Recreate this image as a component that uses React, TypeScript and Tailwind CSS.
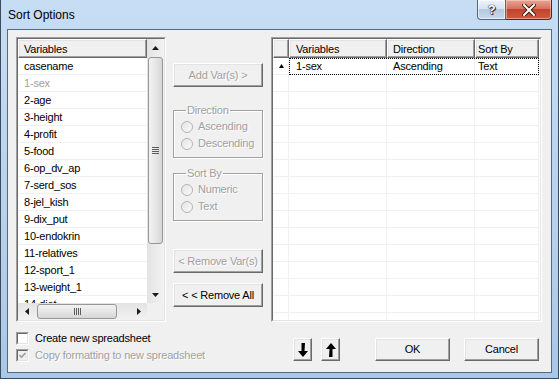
import React from "react";

const variables = [
  "casename",
  "1-sex",
  "2-age",
  "3-height",
  "4-profit",
  "5-food",
  "6-op_dv_ap",
  "7-serd_sos",
  "8-jel_kish",
  "9-dix_put",
  "10-endokrin",
  "11-relatives",
  "12-sport_1",
  "13-weight_1",
  "14-diet",
];

// classic 3D bevels
const raised =
  "border border-t-white border-l-white border-b-[#696969] border-r-[#696969] shadow-[inset_-1px_-1px_0_#a0a0a0,inset_1px_1px_0_#e3e3e3] bg-[#f0f0f0]";

function Sunken({ className, children }: { className?: string; children: React.ReactNode }) {
  return (
    <div className={`border border-t-[#a0a0a0] border-l-[#a0a0a0] border-b-white border-r-white ${className ?? ""}`}>
      <div className="w-full h-full border border-t-[#696969] border-l-[#696969] border-b-[#e3e3e3] border-r-[#e3e3e3] bg-white overflow-hidden">
        {children}
      </div>
    </div>
  );
}

function Button({
  children,
  disabled,
  className,
}: {
  children: React.ReactNode;
  disabled?: boolean;
  className?: string;
}) {
  return (
    <div
      className={`${raised} flex items-center justify-center ${
        disabled ? "text-[#a0a0a0] [text-shadow:1px_1px_0_#fff]" : "text-black"
      } ${className ?? ""}`}
    >
      {children}
    </div>
  );
}

function Tri({ dir }: { dir: "up" | "down" | "left" | "right" }) {
  const pts = {
    up: "0,4 7,4 3.5,0",
    down: "0,0 7,0 3.5,4",
    left: "4,0 4,7 0,3.5",
    right: "0,0 0,7 4,3.5",
  }[dir];
  const vertical = dir === "up" || dir === "down";
  return (
    <svg width={vertical ? 7 : 4} height={vertical ? 4 : 7} viewBox={vertical ? "0 0 7 4" : "0 0 4 7"}>
      <polygon points={pts} fill="#1a1a1a" />
    </svg>
  );
}

function Radio({ label }: { label: string }) {
  return (
    <div className="flex items-center h-[17px]">
      <span className="w-[12px] h-[12px] rounded-full border border-[#b4b4b4] bg-[linear-gradient(135deg,#e4e4e4,#fafafa)]" />
      <span className="ml-[5px] text-[#a0a0a0] [text-shadow:1px_1px_0_#fff]">{label}</span>
    </div>
  );
}

function Group({ title, options, className }: { title: string; options: string[]; className?: string }) {
  return (
    <fieldset className={`border border-[#a0a0a0] shadow-[1px_1px_0_#fff,inset_1px_1px_0_#fff] h-[54px] pl-[7px] pt-[1px] ${className ?? ""}`}>
      <legend className="ml-[5px] px-[1px] text-[#a0a0a0] [text-shadow:1px_1px_0_#fff] leading-[13px]">{title}</legend>
      {options.map((o) => (
        <Radio key={o} label={o} />
      ))}
    </fieldset>
  );
}

function ArrowButton({ dir }: { dir: "up" | "down" }) {
  return (
    <Button className="w-[19px] h-[23px]">
      <svg width="10" height="14" viewBox="0 0 10 14">
        <polygon
          points={
            dir === "down"
              ? "3.5,0 7,0 6.5,8 10,8 5,14 0,8 3.5,8"
              : "5,0 10,6 6.5,6 6.5,14 3,14 3.5,6 0,6"
          }
          fill="#000"
        />
      </svg>
    </Button>
  );
}

export default function App() {
  return (
    <div className="w-[559px] h-[379px] overflow-hidden flex flex-col border-x border-b border-[#3d4b5c] bg-[linear-gradient(180deg,#c6ddf4,#b7d1ec_60%,#a9c7e6)] font-['Liberation_Sans',Arial,sans-serif] text-[11px] tracking-[-0.2px] text-black">
      {/* Title bar */}
      <div className="h-[29px] flex items-start pl-[7px] pr-[6px]">
        <span className="mt-[7px] text-[12px] tracking-normal leading-[16px] text-black">Sort Options</span>
        <div className="ml-auto flex">
          <div className="w-[29px] h-[20px] border border-t-0 border-[#52657a] rounded-bl-[4px] bg-[linear-gradient(180deg,#eef3f9,#d7e3f0_45%,#b6c9de_50%,#c9d9ea)] flex items-center justify-center shadow-[inset_0_0_0_1px_rgba(255,255,255,0.6)]">
            <span className="font-bold text-[13px] leading-none text-white [text-shadow:0_0_1px_#223,0_0_1px_#223,1px_1px_0_#334]">?</span>
          </div>
          <div className="w-[46px] h-[20px] border border-t-0 border-l-0 border-[#5a2218] rounded-br-[4px] bg-[linear-gradient(180deg,#e8a596,#d6725d_45%,#c2432b_50%,#cf5b3e)] flex items-center justify-center shadow-[inset_0_0_0_1px_rgba(255,220,210,0.5)]">
            <svg width="14" height="12" viewBox="0 0 14 12">
              <path d="M2 1 L12 11 M12 1 L2 11" stroke="#3b1c17" strokeWidth="4" strokeLinecap="square" />
              <path d="M2 1 L12 11 M12 1 L2 11" stroke="#fff" strokeWidth="2" strokeLinecap="square" />
            </svg>
          </div>
        </div>
      </div>

      {/* Frame + client */}
      <div className="flex-1 px-[6px] pb-[5px] flex">
        <div className="flex-1 border border-[#55697f] bg-[#f0f0f0] flex flex-col pt-[7px] pl-[8px]">
          <div className="flex h-[285px]">
            {/* Left list */}
            <Sunken className="w-[150px] h-[285px]">
              <div className="flex flex-col h-full">
                <div className="flex flex-1 min-h-0">
                  <div className="flex-1 flex flex-col overflow-hidden">
                    <div className={`${raised} h-[19px] shrink-0 flex items-center pl-[5px] pt-[1px]`}>Variables</div>
                    {variables.map((v) => (
                      <div
                        key={v}
                        className={`h-[17px] shrink-0 border-b border-[#f0f0f0] flex items-center pl-[6px] pt-[1px] ${
                          v === "1-sex" ? "text-[#a0a0a0]" : "text-black"
                        }`}
                      >
                        {v}
                      </div>
                    ))}
                  </div>
                  {/* vertical scrollbar */}
                  <div className="w-[17px] flex flex-col bg-[linear-gradient(90deg,#e3e3e3,#f2f2f2)]">
                    <div className="h-[17px] flex items-center justify-center">
                      <Tri dir="up" />
                    </div>
                    <div className="flex-1 px-[1px]">
                      <div className="mt-[1px] h-[187px] rounded-[3px] border border-[#979797] bg-[linear-gradient(90deg,#f2f2f2,#e6e6e6_50%,#d6d6d6)] flex items-center justify-center">
                        <div className="flex flex-col gap-[1px]">
                          <div className="w-[7px] h-[1px] bg-[#5e5e5e]" />
                          <div className="w-[7px] h-[1px] bg-[#5e5e5e]" />
                          <div className="w-[7px] h-[1px] bg-[#5e5e5e]" />
                          <div className="w-[7px] h-[1px] bg-[#5e5e5e]" />
                        </div>
                      </div>
                    </div>
                    <div className="h-[17px] flex items-center justify-center">
                      <Tri dir="down" />
                    </div>
                  </div>
                </div>
                {/* horizontal scrollbar */}
                <div className="h-[17px] flex shrink-0">
                  <div className="flex-1 flex bg-[linear-gradient(180deg,#e3e3e3,#f2f2f2)]">
                    <div className="w-[17px] flex items-center justify-center">
                      <Tri dir="left" />
                    </div>
                    <div className="flex-1 py-[1px]">
                      <div className="ml-[2px] w-[80px] h-full rounded-[3px] border border-[#979797] bg-[linear-gradient(180deg,#f2f2f2,#e6e6e6_50%,#d6d6d6)] flex items-center justify-center gap-[1px]">
                        <div className="w-[1px] h-[7px] bg-[#5e5e5e]" />
                        <div className="w-[1px] h-[7px] bg-[#5e5e5e]" />
                        <div className="w-[1px] h-[7px] bg-[#5e5e5e]" />
                        <div className="w-[1px] h-[7px] bg-[#5e5e5e]" />
                      </div>
                    </div>
                    <div className="w-[17px] flex items-center justify-center">
                      <Tri dir="right" />
                    </div>
                  </div>
                  <div className="w-[17px] bg-[#f0f0f0]" />
                </div>
              </div>
            </Sunken>

            {/* Middle controls */}
            <div className="ml-[7px] w-[90px] flex flex-col">
              <Button disabled className="mt-[26px] h-[24px]">Add Var(s) &gt;</Button>
              <Group className="mt-[17px]" title="Direction" options={["Ascending", "Descending"]} />
              <Group className="mt-[9px]" title="Sort By" options={["Numeric", "Text"]} />
              <Button disabled className="mt-[28px] h-[24px]">&lt; Remove Var(s)</Button>
              <Button className="mt-[10px] h-[24px]">&lt; &lt; Remove All</Button>
            </div>

            {/* Right table */}
            <Sunken className="ml-[8px] w-[271px] h-[285px]">
              <div className="flex flex-col">
                <div className="flex h-[19px] shrink-0">
                  <div className={`${raised} w-[16px]`} />
                  <div className={`${raised} w-[98px] flex items-center pl-[6px] pt-[1px]`}>Variables</div>
                  <div className={`${raised} w-[88px] flex items-center pl-[5px] pt-[1px]`}>Direction</div>
                  <div className={`${raised} w-[64px] flex items-center pl-[2px] pt-[1px]`}>Sort By</div>
                </div>
                {Array.from({ length: 16 }).map((_, i) => (
                  <div key={i} className="flex h-[17px] shrink-0">
                    <div className="w-[16px] border-r border-b border-[#f0f0f0] flex items-center justify-center pl-[2px]">
                      {i === 0 && (
                        <svg width="5" height="4" viewBox="0 0 5 4">
                          <polygon points="0,4 5,4 2.5,0" fill="#000" />
                        </svg>
                      )}
                    </div>
                    <div
                      className={`flex ${
                        i === 0 ? "outline outline-1 outline-dotted outline-black -outline-offset-1" : ""
                      }`}
                    >
                      <div className="w-[98px] border-r border-b border-[#f0f0f0] flex items-center pl-[7px] pt-[1px]">
                        {i === 0 ? "1-sex" : ""}
                      </div>
                      <div className="w-[88px] border-r border-b border-[#f0f0f0] flex items-center pl-[6px] pt-[1px]">
                        {i === 0 ? "Ascending" : ""}
                      </div>
                      <div className="w-[64px] border-r border-b border-[#f0f0f0] flex items-center pl-[3px] pt-[1px]">
                        {i === 0 ? "Text" : ""}
                      </div>
                    </div>
                  </div>
                ))}
              </div>
            </Sunken>
          </div>

          {/* Bottom area */}
          <div className="flex mt-[8px]">
            <div className="w-[277px] shrink-0 flex flex-col">
              <div className="h-[17px] flex items-center">
                <span className="w-[13px] h-[13px] border border-t-[#a0a0a0] border-l-[#a0a0a0] border-b-white border-r-white">
                  <span className="block w-full h-full border border-t-[#696969] border-l-[#696969] border-b-[#e3e3e3] border-r-[#e3e3e3] bg-white" />
                </span>
                <span className="ml-[6px]">Create new spreadsheet</span>
              </div>
              <div className="h-[17px] flex items-center">
                <span className="w-[13px] h-[13px] border border-t-[#a0a0a0] border-l-[#a0a0a0] border-b-white border-r-white">
                  <span className="flex items-center justify-center w-full h-full border border-t-[#696969] border-l-[#696969] border-b-[#e3e3e3] border-r-[#e3e3e3] bg-[#f0f0f0]">
                    <svg width="7" height="7" viewBox="0 0 7 7">
                      <path d="M0.5 3 L2.5 5 L6.5 1" stroke="#a0a0a0" strokeWidth="1.6" fill="none" />
                    </svg>
                  </span>
                </span>
                <span className="ml-[6px] text-[#a0a0a0] [text-shadow:1px_1px_0_#fff]">Copy formatting to new spreadsheet</span>
              </div>
            </div>
            <div className="flex mt-[8px] items-start">
              <ArrowButton dir="down" />
              <div className="ml-[9px]">
                <ArrowButton dir="up" />
              </div>
              <Button className="ml-[35px] w-[75px] h-[23px]">OK</Button>
              <Button className="ml-[14px] w-[75px] h-[23px]">Cancel</Button>
            </div>
          </div>
        </div>
      </div>
    </div>
  );
}
